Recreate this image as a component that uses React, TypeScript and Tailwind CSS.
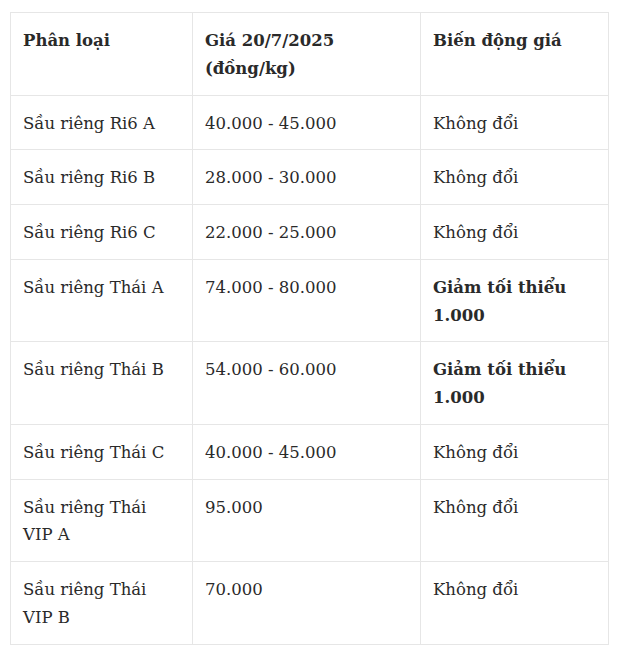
import React from 'react';

interface Row {
  name: string;
  price: string;
  change: string;
  bold?: boolean;
}

const rows: Row[] = [
  { name: 'Sầu riêng Ri6 A', price: '40.000 - 45.000', change: 'Không đổi' },
  { name: 'Sầu riêng Ri6 B', price: '28.000 - 30.000', change: 'Không đổi' },
  { name: 'Sầu riêng Ri6 C', price: '22.000 - 25.000', change: 'Không đổi' },
  { name: 'Sầu riêng Thái A', price: '74.000 - 80.000', change: 'Giảm tối thiểu 1.000', bold: true },
  { name: 'Sầu riêng Thái B', price: '54.000 - 60.000', change: 'Giảm tối thiểu 1.000', bold: true },
  { name: 'Sầu riêng Thái C', price: '40.000 - 45.000', change: 'Không đổi' },
  { name: 'Sầu riêng Thái VIP A', price: '95.000', change: 'Không đổi' },
  { name: 'Sầu riêng Thái VIP B', price: '70.000', change: 'Không đổi' },
];

const cell = 'border border-[#e6e6e6] pl-[12px] pr-[12px] pt-[14px] pb-[12px] align-top text-left';

const App: React.FC = () => {
  return (
    <div className="min-h-[654px] bg-white pl-[10px] pt-[12px] font-['DejaVu_Serif',serif] text-[16.5px] leading-[27.75px] text-[#2a2a2a]">
      <table className="w-[599px] table-fixed border-collapse">
        <colgroup>
          <col className="w-[182px]" />
          <col className="w-[228px]" />
          <col />
        </colgroup>
        <thead>
          <tr className="font-bold">
            <th className={cell}>Phân loại</th>
            <th className={cell}>
              Giá 20/7/2025
              <br />
              (đồng/kg)
            </th>
            <th className={cell}>Biến động giá</th>
          </tr>
        </thead>
        <tbody>
          {rows.map((r) => (
            <tr key={r.name}>
              <td className={cell}>{r.name}</td>
              <td className={cell}>{r.price}</td>
              <td className={`${cell} ${r.bold ? 'font-bold' : ''}`}>{r.change}</td>
            </tr>
          ))}
        </tbody>
      </table>
    </div>
  );
};

export default App;
